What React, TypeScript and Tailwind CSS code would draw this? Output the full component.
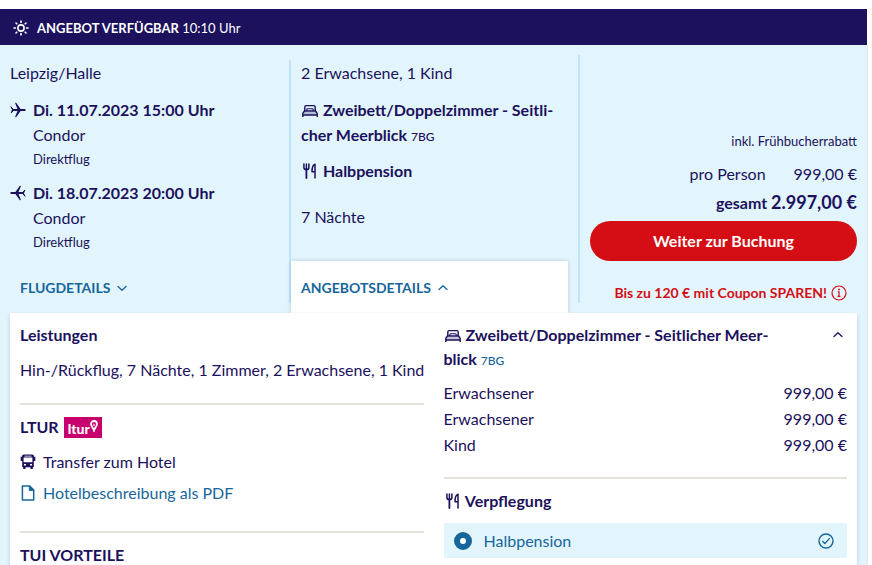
import React, { useState } from 'react';

interface Flight {
  id: number;
  departure: string;
  airline: string;
  type: string;
  inbound: boolean;
}

interface Traveller {
  id: number;
  label: string;
  price: string;
}

const flights: Flight[] = [
  { id: 1, departure: 'Di. 11.07.2023 15:00 Uhr', airline: 'Condor', type: 'Direktflug', inbound: false },
  { id: 2, departure: 'Di. 18.07.2023 20:00 Uhr', airline: 'Condor', type: 'Direktflug', inbound: true }
];

const travellers: Traveller[] = [
  { id: 1, label: 'Erwachsener', price: '999,00 €' },
  { id: 2, label: 'Erwachsener', price: '999,00 €' },
  { id: 3, label: 'Kind', price: '999,00 €' }
];

function SunIcon() {
  return (
    <svg viewBox="0 0 16 16" className="w-4 h-4 shrink-0" fill="none" stroke="currentColor" strokeWidth="1.6" strokeLinecap="round" aria-hidden="true">
      <circle cx="8" cy="8" r="3.1" />
      <path d="M8 1v1.4M8 13.6V15M1 8h1.4M13.6 8H15M3 3l.8.8M12.2 12.2l.8.8M3 13l.8-.8M12.2 3.8l.8-.8" />
    </svg>
  );
}

function PlaneIcon({ inbound }: { inbound: boolean }) {
  return (
    <svg viewBox="0 0 16 16" className={`w-4 h-4 shrink-0 ${inbound ? 'rotate-180' : ''}`} fill="currentColor" stroke="currentColor" strokeLinecap="round" strokeLinejoin="round" aria-hidden="true">
      <path d="M3 8h11.7" strokeWidth="2" />
      <path d="M5.800 1.300 10.600 8l-4.800 6.700L8.600 8z" strokeWidth="1.200" />
      <path d="M1.200 5 3.600 8l-2.400 3 1.200-3z" strokeWidth="1" />
    </svg>
  );
}

function BedIcon() {
  return (
    <svg viewBox="0 0 16 14" className="inline-block w-4 h-3.5 mx-px align-[-2px]" fill="none" stroke="currentColor" strokeWidth="1.4" strokeLinejoin="round" aria-hidden="true">
      <path d="M2.8 7V3c0-.9.5-1.4 1.4-1.4h7.6c.9 0 1.4.5 1.4 1.4v4" />
      <path d="M.8 13V9.4L2.4 7h11.2l1.6 2.4V13M.8 11h14.4" />
      <path d="M4.8 7V5.6c0-.6.3-.9.9-.9h4.6c.6 0 .9.3.9.9V7" strokeWidth="1.1" />
      <path d="M1.4 8h13.2v3H1.4z" fill="currentColor" fillOpacity=".25" stroke="none" />
    </svg>
  );
}

function CutleryIcon() {
  return (
    <svg viewBox="0 0 16 16" className="inline-block w-4 h-4 mx-px align-[-2px]" fill="none" stroke="currentColor" strokeWidth="1.5" strokeLinecap="round" strokeLinejoin="round" aria-hidden="true">
      <path d="M1.9 1v3.4c0 1.3.9 2.1 2.5 2.1s2.5-.8 2.5-2.1V1M4.4 1v5" />
      <path d="M4.4 6.5V15" strokeWidth="1.8" />
      <path d="M13 15V1.2c-2 .6-3 3.4-3 7.5h3" />
    </svg>
  );
}

function BusIcon() {
  return (
    <svg viewBox="0 0 16 16" className="w-4 h-4 shrink-0" aria-hidden="true">
      <path fill="currentColor" fillRule="evenodd" d="M4 .6h8c1.3 0 2 .8 2 2.1h1.3v4.2h-1.5v6.3h-1V15h-2.3v-1.8h-5V15H3.2v-1.8h-1V6.9H.7V2.700H2C2 1.400 2.700.6 4 .6ZM3.600 3.600v4.600h8.800V3.600ZM4 10v1.600h2V10Zm6 0v1.600h2V10ZM4.500 1.700v.7h7v-.7Z" />
    </svg>
  );
}

function FileIcon() {
  return (
    <svg viewBox="0 0 16 16" className="w-4 h-4 shrink-0" fill="none" stroke="currentColor" strokeWidth="1.5" strokeLinejoin="round" aria-hidden="true">
      <path d="M2.4 1h7.300l4 4v10H2.400z" />
      <path d="M9.300 1v4.400h4.400z" fill="currentColor" strokeWidth="1" />
    </svg>
  );
}

function Chevron({ up = false }: { up?: boolean }) {
  return (
    <svg viewBox="0 0 12 12" className={`w-3 h-3 shrink-0 ${up ? 'rotate-180' : ''}`} fill="none" stroke="currentColor" strokeWidth="1.3" strokeLinecap="round" strokeLinejoin="round" aria-hidden="true">
      <path d="M2 4.500 6 8.300 10 4.500" />
    </svg>
  );
}

function InfoIcon() {
  return (
    <svg viewBox="0 0 16 16" className="w-4 h-4 shrink-0" fill="none" stroke="currentColor" strokeWidth="1.2" aria-hidden="true">
      <circle cx="8" cy="8" r="7" />
      <path d="M6.800 6.800H8v4.500M6.500 11.400h3" />
      <circle cx="8" cy="4.500" r=".9" fill="currentColor" stroke="none" />
    </svg>
  );
}

function CheckIcon() {
  return (
    <svg viewBox="0 0 16 16" className="w-4 h-4 shrink-0" fill="none" stroke="currentColor" strokeWidth="1.4" strokeLinecap="round" strokeLinejoin="round" aria-hidden="true">
      <circle cx="8" cy="8" r="7" />
      <path d="m4.800 8.600 2 2 4.500-5" />
    </svg>
  );
}

function LturLogo() {
  return (
    <span className="flex items-end justify-center w-[38px] h-[21px] bg-[#c8006e] text-white">
      <span className="text-sm leading-[18px] font-black">ltur</span>
      <svg viewBox="0 0 8 12" className="w-2 h-3 self-start mt-[3px]" fill="none" stroke="currentColor" strokeWidth="1.8" aria-hidden="true">
        <path d="M4 10.500C3.300 8 1 6.300 1 4a3 3 0 0 1 6 0C7 6.300 4.700 8 4 10.500Z" />
        <path d="M4 6V3.800" strokeWidth="1.2" />
      </svg>
    </span>
  );
}

export default function OfferCard() {
  const [board, setBoard] = useState('halbpension');

  return (
    <div lang="de" className="min-h-screen flex flex-col pt-[9px] pr-1 bg-white font-['Lato','Noto_Sans',sans-serif] text-base leading-6 text-[#1b115c]">
      {/* Availability */}
      <div className="flex items-center gap-2 h-9 pl-[13px] pt-0.5 mr-px bg-[#1b115c] text-white text-[13px]">
        <SunIcon />
        <p><strong>ANGEBOT VERFÜGBAR</strong> 10:10 Uhr</p>
      </div>

      <div className="flex-1 flex flex-col bg-[#e2f5fd] border-r border-gray-200">
        <div className="grid grid-cols-3">
          {/* Flights */}
          <div className="flex flex-col pt-[15px] pl-[10px]">
            <p className="leading-[25px]">Leipzig/Halle</p>
            <ul className="mt-3 space-y-[9px]">
              {flights.map((flight) => (
                <li key={flight.id} className="flex items-start gap-[7px]">
                  <span className="flex items-center h-[25px]">
                    <PlaneIcon inbound={flight.inbound} />
                  </span>
                  <div>
                    <p className="leading-[25px] font-bold">{flight.departure}</p>
                    <p className="leading-[25px]">{flight.airline}</p>
                    <p className="text-[13px] leading-6">{flight.type}</p>
                  </div>
                </li>
              ))}
            </ul>
            <button type="button" className="mt-auto -mb-[10px] h-[52px] pl-[10px] pt-0.5 flex items-center gap-1.5 text-sm font-bold text-[#17669b]">
              FLUGDETAILS
              <Chevron />
            </button>
          </div>

          {/* Room and board */}
          <div className="flex flex-col pt-[15px]">
            <div className="flex-1 flex flex-col border-l-2 border-[#bfe5fa]">
              <div className="pl-[10px] pr-2 leading-[25px]">
                <p>2 Erwachsene, 1 Kind</p>
                <p className="mt-3 font-bold">
                  <BedIcon /> Zweibett/Doppelzimmer - Seitli&shy;cher Meerblick <span className="text-xs font-medium">7BG</span>
                </p>
                <p className="mt-[11px] font-bold">
                  <CutleryIcon /> Halbpension
                </p>
                <p className="mt-[21px]">7 Nächte</p>
              </div>
              <button type="button" className="relative mt-8 -mb-[10px] mr-[10px] h-[52px] pl-[10px] pt-0.5 flex items-center gap-1.5 bg-white shadow-[0_0_4px_rgba(27,17,92,0.2)] text-sm font-bold text-[#17669b]">
                ANGEBOTSDETAILS
                <Chevron up />
              </button>
            </div>
          </div>

          {/* Price */}
          <div className="flex flex-col pt-[10px]">
            <div className="flex-1 flex flex-col justify-end border-l-2 border-[#bfe5fa] px-[10px] text-right">
              <p className="text-[13px] leading-6">inkl. Frühbucherrabatt</p>
              <p className="mt-[9px] flex justify-end gap-7">
                <span>pro Person</span>
                <span>999,00 €</span>
              </p>
              <p className="mt-1 font-bold">
                gesamt <span className="text-lg leading-6">2.997,00 €</span>
              </p>
              <button type="button" className="mt-1.5 h-10 rounded-full bg-[#d40e14] text-white font-bold">
                Weiter zur Buchung
              </button>
              <p className="mt-[22px] pr-[10px] flex items-center justify-end gap-1 text-sm leading-5 font-bold text-[#d40e14]">
                Bis zu 120 € mit Coupon SPAREN!
                <InfoIcon />
              </p>
            </div>
          </div>
        </div>

        {/* Offer details */}
        <div className="relative flex-1 mt-[10px] mx-[10px] px-[10px] pt-[10px] grid grid-cols-2 gap-5 bg-white shadow-[0_2px_4px_rgba(27,17,92,0.2)]">
          <section>
            <h2 className="font-bold">Leistungen</h2>
            <p className="mt-[11px] whitespace-nowrap">Hin-/Rückflug, 7 Nächte, 1 Zimmer, 2 Erwachsene, 1 Kind</p>
            <hr className="mt-[21px] border-t-2 border-[#e5e1db]" />
            <div className="mt-[10px] flex items-center gap-[5px]">
              <h2 className="font-bold">LTUR</h2>
              <LturLogo />
            </div>
            <p className="mt-[11px] flex items-center gap-[7px]">
              <BusIcon />
              Transfer zum Hotel
            </p>
            <a href="#pdf" className="mt-[7px] flex items-center gap-[7px] text-[#17669b]">
              <FileIcon />
              Hotelbeschreibung als PDF
            </a>
            <hr className="mt-[26px] border-t-2 border-[#e5e1db]" />
            <h2 className="mt-[10px] font-bold">TUI VORTEILE</h2>
          </section>

          <section>
            <div className="flex items-start justify-between">
              <h2 className="flex-1 pr-12 font-bold">
                <BedIcon /> Zweibett/Doppelzimmer - Seitlicher Meer&shy;blick <span className="text-xs font-medium text-[#17669b]">7BG</span>
              </h2>
              <button type="button" aria-label="Zimmer einklappen" className="flex items-center h-6 pr-[3px]">
                <Chevron up />
              </button>
            </div>
            <table className="w-full mt-[9px] leading-[26px]">
              <tbody>
                {travellers.map((traveller) => (
                  <tr key={traveller.id}>
                    <td>{traveller.label}</td>
                    <td className="text-right">{traveller.price}</td>
                  </tr>
                ))}
              </tbody>
            </table>
            <hr className="mt-[19px] border-t-2 border-[#e5e1db]" />
            <h2 className="mt-[10px] font-bold">
              <CutleryIcon /> Verpflegung
            </h2>
            <label className="mt-[10px] h-[35px] px-[10px] flex items-center bg-[#e2f5fd] text-[#17669b]">
              <input
                type="radio"
                name="board"
                value="halbpension"
                checked={board === 'halbpension'}
                onChange={(e) => setBoard(e.target.value)}
                className="appearance-none w-[18px] h-[18px] mr-3 rounded-full border-[#17669b] border bg-white checked:border-6"
              />
              Halbpension
              <span className="ml-auto mr-[3px]">
                <CheckIcon />
              </span>
            </label>
          </section>
        </div>
      </div>
    </div>
  );
}
